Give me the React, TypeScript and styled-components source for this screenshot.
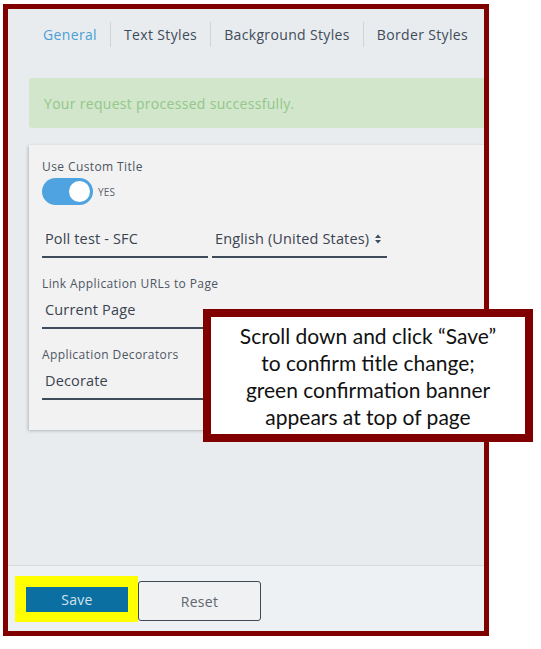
import React from "react";
import styled, { createGlobalStyle } from "styled-components";

const Global = createGlobalStyle`
  html, body { margin: 0; padding: 0; background: #ffffff; }
  body { font-family: "Open Sans", "Noto Sans", sans-serif; }
  * { box-sizing: border-box; }
`;

const Page = styled.div`
  position: relative;
  width: 541px;
  height: 649px;
  padding: 4px 0 0 3px;
`;

const Frame = styled.div`
  width: 486px;
  height: 632px;
  border: 5px solid #800000;
  display: flex;
  flex-direction: column;
  overflow: hidden;
  background: #e8ecee;
`;

const Content = styled.div`
  flex: 1;
  display: flex;
  flex-direction: column;
  padding: 13px 0 0 21px;
  background: #e8ecee;
`;

const Tabs = styled.nav`
  display: flex;
  align-items: stretch;
  height: 25px;
  padding-left: 14px;
`;

const Tab = styled.div<{ $active?: boolean; $first?: boolean }>`
  display: flex;
  align-items: center;
  padding: 0 13px 0 ${(p) => (p.$first ? "0" : "13px")};
  font-size: 14px;
  letter-spacing: 0.35px;
  color: ${(p) => (p.$active ? "#4a9fd6" : "#3f4b5b")};
  white-space: nowrap;
  & + & {
    border-left: 1px solid #cfd3d6;
  }
`;

const Banner = styled.div`
  margin-top: 31px;
  height: 50px;
  margin-right: -10px;
  display: flex;
  align-items: center;
  padding-left: 15px;
  background: #d1e6ca;
  border-radius: 3px;
  color: #93c78b;
  font-size: 14px;
  letter-spacing: 0.3px;
`;

const Card = styled.section`
  margin-top: 17px;
  margin-right: -10px;
  padding: 14px 0 30px 13px;
  background: #f2f2f2;
  box-shadow: -1px 1px 3px rgba(0, 0, 0, 0.22);
  display: flex;
  flex-direction: column;
  align-items: flex-start;
`;

const Label = styled.div<{ $gap?: number }>`
  font-size: 12px;
  line-height: 16px;
  color: #4d5663;
  margin-top: ${(p) => p.$gap ?? 0}px;
  letter-spacing: 0.4px;
`;

const ToggleRow = styled.div`
  display: flex;
  align-items: center;
  gap: 5px;
  margin-top: 3px;
`;

const Track = styled.div`
  width: 51px;
  height: 27px;
  border-radius: 14px;
  background: #4fa3e0;
  display: flex;
  align-items: center;
  justify-content: flex-end;
  padding-right: 3px;
`;

const Knob = styled.div`
  width: 21px;
  height: 21px;
  border-radius: 50%;
  background: #ffffff;
`;

const ToggleText = styled.span`
  font-size: 10px;
  color: #5a6270;
  letter-spacing: 0.2px;
`;

const FieldRow = styled.div`
  display: flex;
  gap: 4px;
  margin-top: 16px;
`;

const Field = styled.div<{ $width: number }>`
  width: ${(p) => p.$width}px;
  height: 37px;
  border-bottom: 2px solid #3e4b5a;
  display: flex;
  align-items: center;
  gap: 6px;
  padding-left: 3px;
  font-size: 14.5px;
  color: #3a4350;
  letter-spacing: 0.15px;
  white-space: nowrap;
`;

const Footer = styled.footer`
  height: 66px;
  border-top: 1px solid #d6dadd;
  background: #eef1f3;
  display: flex;
  align-items: flex-start;
  padding: 10px 0 0 7px;
`;

const Highlight = styled.div`
  background: #ffff00;
  padding: 11px 10px 10px 11px;
  display: flex;
`;

const SaveButton = styled.button`
  width: 102px;
  height: 25px;
  border: none;
  background: #0b6fa2;
  color: #d3e2ec;
  font-family: inherit;
  font-size: 14px;
  letter-spacing: 0.3px;
  padding: 0;
`;

const ResetButton = styled.button`
  margin-top: 5px;
  width: 123px;
  height: 40px;
  border: 1.5px solid #3f4a55;
  border-radius: 3px;
  background: #f0f1f2;
  color: #5f6670;
  font-family: inherit;
  font-size: 14px;
  letter-spacing: 0.3px;
  padding: 0;
`;

const Callout = styled.div`
  position: absolute;
  left: 203px;
  top: 309px;
  width: 330px;
  height: 133px;
  border: 8px solid #800000;
  background: #ffffff;
  display: flex;
  flex-direction: column;
  align-items: center;
  justify-content: center;
  font-family: "Lato", "Open Sans", sans-serif;
  font-size: 21px;
  line-height: 27px;
  color: #111111;
  text-align: center;
`;

const Arrows = () => (
  <svg width="6" height="10" viewBox="0 0 6 10">
    <path d="M0 4 L3 0.5 L6 4 Z" fill="#3e4b5a" />
    <path d="M0 6 L3 9.5 L6 6 Z" fill="#3e4b5a" />
  </svg>
);

export default function App() {
  return (
    <>
      <Global />
      <Page>
        <Frame>
          <Content>
            <Tabs>
              <Tab $active $first>General</Tab>
              <Tab>Text Styles</Tab>
              <Tab>Background Styles</Tab>
              <Tab>Border Styles</Tab>
            </Tabs>
            <Banner>Your request processed successfully.</Banner>
            <Card>
              <Label>Use Custom Title</Label>
              <ToggleRow>
                <Track>
                  <Knob />
                </Track>
                <ToggleText>YES</ToggleText>
              </ToggleRow>
              <FieldRow>
                <Field $width={166}>Poll test - SFC</Field>
                <Field $width={175}>
                  English (United States) <Arrows />
                </Field>
              </FieldRow>
              <Label $gap={18}>Link Application URLs to Page</Label>
              <Field $width={166}>Current Page</Field>
              <Label $gap={18}>Application Decorators</Label>
              <Field $width={166}>Decorate</Field>
            </Card>
          </Content>
          <Footer>
            <Highlight>
              <SaveButton>Save</SaveButton>
            </Highlight>
            <ResetButton>Reset</ResetButton>
          </Footer>
        </Frame>
        <Callout>
          <div>Scroll down and click “Save”</div>
          <div>to confirm title change;</div>
          <div>green confirmation banner</div>
          <div>appears at top of page</div>
        </Callout>
      </Page>
    </>
  );
}
